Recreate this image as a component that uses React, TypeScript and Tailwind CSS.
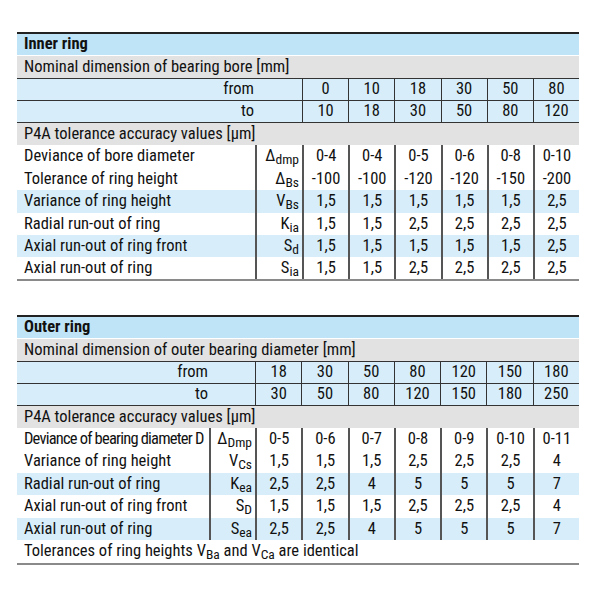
import React from "react";

type Row = { label: string; sym: React.ReactNode; vals: string[]; hl?: boolean; h: string; tight?: boolean };

const font = { fontFamily: "'Liberation Sans Narrow', 'Arial Narrow', 'Roboto Condensed', 'Liberation Sans', sans-serif" };

function Sym({ main, sub }: { main: string; sub: string }) {
  return (
    <span className="whitespace-nowrap">
      {main}
      <span className="relative top-[3px] text-[13.5px]">{sub}</span>
    </span>
  );
}

function Table({
  title,
  nominal,
  from,
  to,
  rows,
  labelW,
  symW,
  fromW,
  fromPr,
  footnote,
}: {
  title: string;
  nominal: string;
  from: string[];
  to: string[];
  rows: Row[];
  labelW: string;
  symW: string;
  fromW: string;
  fromPr: string;
  footnote?: React.ReactNode;
}) {
  return (
    <div className="border-t-2 border-[#222] border-b-2 border-b-[#8a8a8a] text-[16.5px] text-[#111]">
      <div className="h-[21px] bg-[#bfe4f7] pl-[7px] flex items-center font-bold">{title}</div>
      <div className="mt-px h-[22px] bg-[#e2e2e2] pl-[7px] flex items-center">{nominal}</div>
      {[from, to].map((arr, i) => (
        <div key={i} className="h-[22px] border-t border-[#333] bg-[#d7eefa] flex">
          <div className={`${fromW} ${fromPr} flex items-center justify-end shrink-0`}>{i === 0 ? "from" : "to"}</div>
          {arr.map((v, j) => (
            <div key={j} className="flex-1 border-l border-[#333] flex items-center justify-center">
              {v}
            </div>
          ))}
        </div>
      ))}
      <div className="h-[23px] border-t border-[#333] bg-[#e2e2e2] pl-[7px] flex items-center">
        P4A tolerance accuracy values [µm]
      </div>
      {rows.map((r, i) => (
        <div key={i} className={`${r.h} flex ${r.hl ? "bg-[#d7eefa]" : "bg-white"}`}>
          <div className={`${labelW} shrink-0 pl-[7px] flex items-center whitespace-nowrap ${r.tight ? "tracking-[-0.8px]" : ""}`}>
            {r.label}
          </div>
          <div className={`${symW} shrink-0 border-l-2 border-[#555] pr-[3px] flex items-center justify-end`}>{r.sym}</div>
          {r.vals.map((v, j) => (
            <div key={j} className="flex-1 border-l-2 border-[#555] flex items-center justify-center">
              {v}
            </div>
          ))}
        </div>
      ))}
      {footnote && <div className="h-[23px] pl-[7px] flex items-center bg-white">{footnote}</div>}
    </div>
  );
}

export default function App() {
  const inner: Row[] = [
    { label: "Deviance of bore diameter", sym: <Sym main="Δ" sub="dmp" />, vals: ["0-4", "0-4", "0-5", "0-6", "0-8", "0-10"], h: "h-[23px]" },
    { label: "Tolerance of ring height", sym: <Sym main="Δ" sub="Bs" />, vals: ["-100", "-100", "-120", "-120", "-150", "-200"], h: "h-[22px]" },
    { label: "Variance of ring height", sym: <Sym main="V" sub="Bs" />, vals: ["1,5", "1,5", "1,5", "1,5", "1,5", "2,5"], hl: true, h: "h-[23px]" },
    { label: "Radial run-out of ring", sym: <Sym main="K" sub="ia" />, vals: ["1,5", "1,5", "2,5", "2,5", "2,5", "2,5"], h: "h-[22px]" },
    { label: "Axial run-out of ring front", sym: <Sym main="S" sub="d" />, vals: ["1,5", "1,5", "1,5", "1,5", "1,5", "2,5"], hl: true, h: "h-[22px]" },
    { label: "Axial run-out of ring", sym: <Sym main="S" sub="ia" />, vals: ["1,5", "1,5", "2,5", "2,5", "2,5", "2,5"], h: "h-[22px]" },
  ];
  const outer: Row[] = [
    { label: "Deviance of bearing diameter D", sym: <Sym main="Δ" sub="Dmp" />, vals: ["0-5", "0-6", "0-7", "0-8", "0-9", "0-10", "0-11"], h: "h-[22px]", tight: true },
    { label: "Variance of ring height", sym: <Sym main="V" sub="Cs" />, vals: ["1,5", "1,5", "1,5", "2,5", "2,5", "2,5", "4"], h: "h-[23px]" },
    { label: "Radial run-out of ring", sym: <Sym main="K" sub="ea" />, vals: ["2,5", "2,5", "4", "5", "5", "5", "7"], hl: true, h: "h-[22px]" },
    { label: "Axial run-out of ring front", sym: <Sym main="S" sub="D" />, vals: ["1,5", "1,5", "1,5", "2,5", "2,5", "2,5", "4"], h: "h-[23px]" },
    { label: "Axial run-out of ring", sym: <Sym main="S" sub="ea" />, vals: ["2,5", "2,5", "4", "5", "5", "5", "7"], hl: true, h: "h-[22px]" },
  ];
  return (
    <div className="w-[600px] h-[590px] bg-white pt-[32px] pl-[17px] pr-[21px]" style={font}>
      <Table
        title="Inner ring"
        nominal="Nominal dimension of bearing bore [mm]"
        from={["0", "10", "18", "30", "50", "80"]}
        to={["10", "18", "30", "50", "80", "120"]}
        rows={inner}
        labelW="w-[238px]"
        symW="w-[47px]"
        fromW="w-[285px]"
        fromPr="pr-[48px]"
      />
      <div className="h-[34px]" />
      <Table
        title="Outer ring"
        nominal="Nominal dimension of outer bearing diameter [mm]"
        from={["18", "30", "50", "80", "120", "150", "180"]}
        to={["30", "50", "80", "120", "150", "180", "250"]}
        rows={outer}
        labelW="w-[192px]"
        symW="w-[46px]"
        fromW="w-[238px]"
        fromPr="pr-[47px]"
        footnote={
          <span>
            Tolerances of ring heights V<span className="relative top-[3px] text-[13.5px]">Ba</span> and V
            <span className="relative top-[3px] text-[13.5px]">Ca</span> are identical
          </span>
        }
      />
    </div>
  );
}
